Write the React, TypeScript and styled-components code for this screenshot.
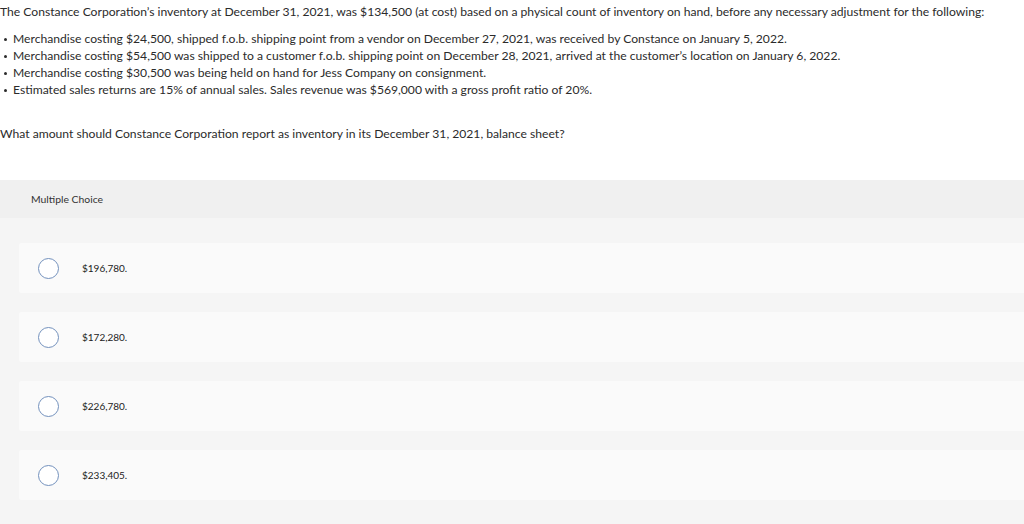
import React from "react";
import styled, { createGlobalStyle } from "styled-components";

const Global = createGlobalStyle`
  html, body { margin: 0; padding: 0; background: #ffffff; }
  body { font-family: Lato, "Open Sans", "Liberation Sans", sans-serif; color: #2b2b2b; }
`;

const Page = styled.div`
  display: flex;
  flex-direction: column;
  min-height: 524px;
`;

const Stem = styled.div`
  padding-top: 3px;
  font-size: 12.15px;
  line-height: 17px;
`;

const Intro = styled.p`
  margin: 0;
  white-space: nowrap;
`;

const Bullets = styled.ul`
  margin: 10px 0 0 0;
  padding: 0;
  list-style: none;
`;

const Bullet = styled.li`
  display: flex;
  align-items: center;
  white-space: nowrap;
  &::before {
    content: "";
    width: 3px;
    height: 3px;
    border-radius: 50%;
    background: #2b2b2b;
    margin: 1px 6px 0 4px;
    flex-shrink: 0;
  }
`;

const Question = styled.p`
  margin: 27px 0 0 0;
  white-space: nowrap;
`;

const Choices = styled.section`
  margin-top: 38px;
  flex: 1;
  background: #f5f5f5;
  display: flex;
  flex-direction: column;
`;

const ChoiceHeader = styled.div`
  height: 38px;
  background: #f0f0f0;
  display: flex;
  align-items: center;
  padding-left: 31px;
  font-size: 10.4px;
  color: #333;
`;

const OptionList = styled.div`
  display: flex;
  flex-direction: column;
  gap: 19px;
  padding: 25px 0 24px 19px;
`;

const Option = styled.label`
  height: 50px;
  background: #fafafa;
  border-radius: 2px 0 0 2px;
  display: flex;
  align-items: center;
  padding-left: 19px;
  font-size: 10px;
  color: #222;
`;

const Radio = styled.span`
  width: 21px;
  height: 21px;
  box-sizing: border-box;
  border-radius: 50%;
  border: 1px solid #7391bd;
  background: #ffffff;
  flex-shrink: 0;
  margin-right: 23px;
`;

const options = ["$196,780.", "$172,280.", "$226,780.", "$233,405."];

export default function App() {
  return (
    <Page>
      <Global />
      <Stem>
        <Intro>
          The Constance Corporation’s inventory at December 31, 2021, was $134,500 (at cost) based on a physical count of inventory on hand, before any necessary adjustment for the following:
        </Intro>
        <Bullets>
          <Bullet>Merchandise costing $24,500, shipped f.o.b. shipping point from a vendor on December 27, 2021, was received by Constance on January 5, 2022.</Bullet>
          <Bullet>Merchandise costing $54,500 was shipped to a customer f.o.b. shipping point on December 28, 2021, arrived at the customer’s location on January 6, 2022.</Bullet>
          <Bullet>Merchandise costing $30,500 was being held on hand for Jess Company on consignment.</Bullet>
          <Bullet>Estimated sales returns are 15% of annual sales. Sales revenue was $569,000 with a gross profit ratio of 20%.</Bullet>
        </Bullets>
        <Question>
          What amount should Constance Corporation report as inventory in its December 31, 2021, balance sheet?
        </Question>
      </Stem>
      <Choices>
        <ChoiceHeader>Multiple Choice</ChoiceHeader>
        <OptionList>
          {options.map((o) => (
            <Option key={o}>
              <Radio />
              {o}
            </Option>
          ))}
        </OptionList>
      </Choices>
    </Page>
  );
}
